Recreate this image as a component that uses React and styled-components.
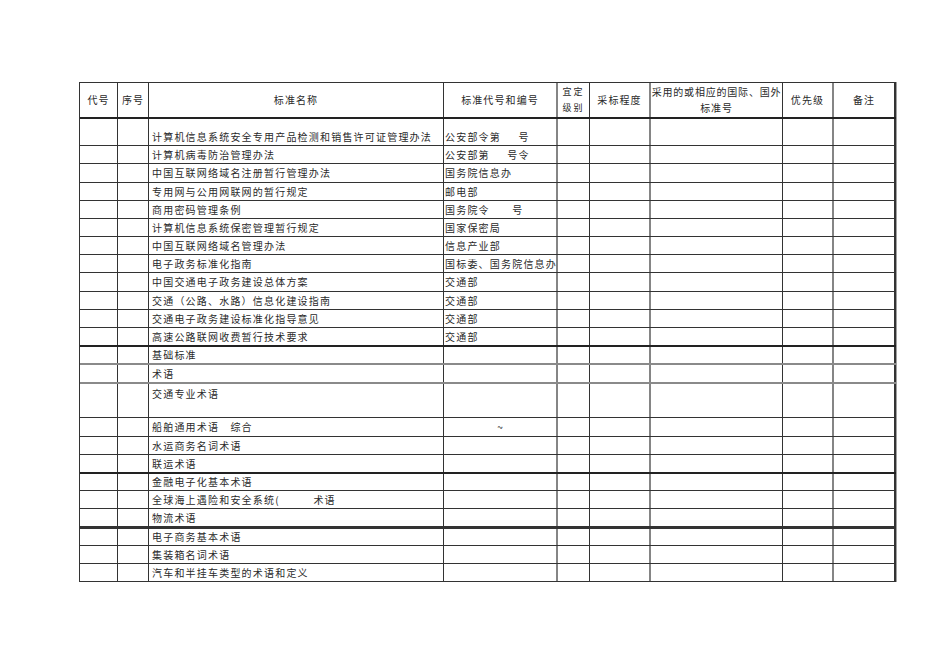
import React from 'react';
import styled, {createGlobalStyle} from 'styled-components';

const GlobalStyle = createGlobalStyle`
    html, body {
        margin: 0;
        background: #ffffff;
    }

    body {
        font-family: "Noto Sans CJK SC", "Liberation Serif", serif;
        color: #2a2a2a;
    }
`;

// 列宽（含右边框）和竖线样式
const COLS = [
    {w: 38, line: 'dark'},
    {w: 31, line: 'dark'},
    {w: 295, line: 'dark'},
    {w: 114, line: 'gray'},
    {w: 32, line: 'dark'},
    {w: 61, line: 'gray'},
    {w: 132, line: 'dark'},
    {w: 51, line: 'gray'},
    {w: 62, line: 'edge'},
];

const H_LINES = {
    thin: '1px solid #333333',
    thick: '2px solid #222222',
    gray: '2px solid #8a8a8a',
    heavy: '3px solid #333333',
};

const V_LINES = {
    dark: '1px solid #333333',
    gray: '2px solid #858585',
    edge: '2px solid #333333',
};

const Page = styled.div`
    padding: 82px 0 0 79px;
`;

const Table = styled.div`
    display: flex;
    flex-direction: column;
    width: fit-content;
    border-top: 1px solid #333333;
    border-left: 1px solid #333333;
    box-shadow: 1px 0 0 #a0a0a0;
`;

const Row = styled.div`
    display: grid;
    grid-template-columns: ${COLS.map((c) => `${c.w}px`).join(' ')};
    height: ${(props) => props.$h}px;
    box-sizing: border-box;
    border-bottom: ${(props) => H_LINES[props.$line || 'thin']};
`;

const Cell = styled.div`
    display: flex;
    align-items: ${(props) => props.$valign || 'center'};
    justify-content: ${(props) => props.$align || 'flex-start'};
    box-sizing: border-box;
    min-width: 0;
    border-right: ${(props) => V_LINES[props.$line]};
    padding: ${(props) => props.$pad || '0'};
    font-size: 10px;
    line-height: 14px;
    letter-spacing: 1.2px;
    white-space: pre;
    overflow: hidden;
`;

const HeadCell = styled(Cell)`
    align-items: center;
    justify-content: center;
    text-align: center;
    line-height: 16px;
    letter-spacing: ${(props) => props.$spacing || '1.1px'};
    font-size: ${(props) => props.$size || '10px'};
`;

const HEAD = [
    {text: '代号'},
    {text: '序号'},
    {text: '标准名称'},
    {text: '标准代号和编号'},
    {text: '宜定\n级别', size: '9px', spacing: '2px'},
    {text: '采标程度'},
    {text: '采用的或相应的国际、国外\n标准号', spacing: '0.8px'},
    {text: '优先级'},
    {text: '备注'},
];

const ROWS = [
    {h: 27, name: '计算机信息系统安全专用产品检测和销售许可证管理办法', code: '公安部令第\u3000\u2002号', valign: 'flex-end'},
    {h: 18, name: '计算机病毒防治管理办法', code: '公安部第\u3000\u2002号令'},
    {h: 19, name: '中国互联网络域名注册暂行管理办法', code: '国务院信息办'},
    {h: 18, name: '专用网与公用网联网的暂行规定', code: '邮电部'},
    {h: 18, name: '商用密码管理条例', code: '国务院令\u3000\u3000号'},
    {h: 18, name: '计算机信息系统保密管理暂行规定', code: '国家保密局'},
    {h: 18, name: '中国互联网络域名管理办法', code: '信息产业部'},
    {h: 18, name: '电子政务标准化指南', code: '国标委、国务院信息办'},
    {h: 19, name: '中国交通电子政务建设总体方案', code: '交通部'},
    {h: 18, name: '交通（公路、水路）信息化建设指南', code: '交通部'},
    {h: 18, name: '交通电子政务建设标准化指导意见', code: '交通部'},
    {h: 19, name: '高速公路联网收费暂行技术要求', code: '交通部', line: 'thick'},
    {h: 18, name: '基础标准', line: 'gray'},
    {h: 19, name: '术语', line: 'gray'},
    {h: 34, name: '交通专业术语', valign: 'flex-start'},
    {h: 19, name: '船舶通用术语\u3000综合', code: '~', codeAlign: 'center'},
    {h: 18, name: '水运商务名词术语'},
    {h: 19, name: '联运术语', line: 'thick'},
    {h: 17, name: '金融电子化基本术语'},
    {h: 18, name: '全球海上遇险和安全系统(\u3000\u3000\u3000术语'},
    {h: 20, name: '物流术语', line: 'heavy'},
    {h: 17, name: '电子商务基本术语'},
    {h: 18, name: '集装箱名词术语'},
    {h: 18, name: '汽车和半挂车类型的术语和定义'},
];

const cellPad = (row, col) => {
    if (col === 2) {
        if (row.valign === 'flex-start') return '3px 0 0 3px';
        if (row.valign === 'flex-end') return '0 0 1px 3px';
        return '0 0 0 3px';
    }
    if (col === 3 && row.valign === 'flex-end') return '0 0 1px 1px';
    if (col === 3) return '0 0 0 1px';
    return '0';
};

const DataRow = ({row}) => (
    <Row $h={row.h} $line={row.line}>
        {COLS.map((c, i) => {
            let text = '';
            if (i === 2) text = row.name;
            if (i === 3) text = row.code || '';
            return (
                <Cell key={i}
                      $line={c.line}
                      $valign={row.valign}
                      $align={i === 3 && row.codeAlign ? 'center' : 'flex-start'}
                      $pad={cellPad(row, i)}>
                    {text}
                </Cell>
            );
        })}
    </Row>
);

export default function App() {
    return (
        <>
            <GlobalStyle/>
            <Page>
                <Table>
                    <Row $h={36} $line="thick">
                        {HEAD.map((hd, i) => (
                            <HeadCell key={i} $line={COLS[i].line} $size={hd.size} $spacing={hd.spacing}>
                                {hd.text}
                            </HeadCell>
                        ))}
                    </Row>
                    {ROWS.map((row, i) => <DataRow key={i} row={row}/>)}
                </Table>
            </Page>
        </>
    );
}
